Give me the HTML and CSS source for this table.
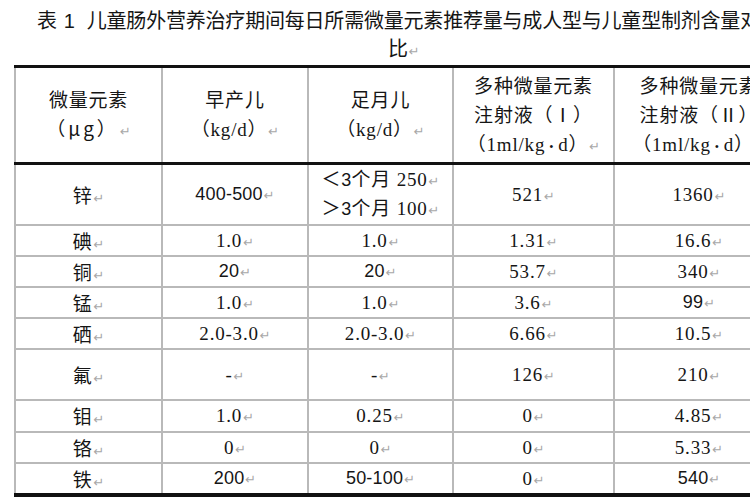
FILE: index.html
```html
<!DOCTYPE html>
<html lang="zh-CN">
<head>
<meta charset="utf-8">
<title>表1 儿童肠外营养微量元素</title>
<link rel="stylesheet" href="styles.css">
</head>
<body>
<div class="title">
  <div class="t1"><span>表</span><span class="tn">1</span><span>儿童肠外营养治疗期间每日所需微量元素推荐量与成人型与儿童型制剂含量对</span></div>
  <div class="t2">比<span class="pm">↵</span></div>
</div>
<table class="tbl">
  <colgroup>
    <col class="c1"><col class="c2"><col class="c3"><col class="c4"><col class="c5">
  </colgroup>
  <thead>
    <tr>
      <th><span class="cjk">微量元素</span><br><span class="cjk mu">（μg）</span><span class="pm">↵</span></th>
      <th><span class="cjk">早产儿</span><br>（kg/d）<span class="pm">↵</span></th>
      <th><span class="cjk">足月儿</span><br>（kg/d）<span class="pm">↵</span></th>
      <th><span class="cjk">多种微量元素</span><br><span class="cjk">注射液（Ⅰ）</span><br>（1ml/kg<span class="dot">•</span>d）<span class="pm">↵</span></th>
      <th><span class="cjk">多种微量元素</span><br><span class="cjk">注射液（Ⅱ）</span><br>（1ml/kg<span class="dot">•</span>d）<span class="pm">↵</span></th>
    </tr>
  </thead>
  <tbody>
    <tr class="r-zn">
      <td class="cjk">锌<span class="pm">↵</span></td>
      <td class="sans">400-500<span class="pm">↵</span></td>
      <td><span class="cjk">＜</span><span class="sans">3</span><span class="cjk">个月</span> 250<span class="pm">↵</span><br><span class="cjk">＞</span><span class="sans">3</span><span class="cjk">个月</span> 100<span class="pm">↵</span></td>
      <td>521<span class="pm">↵</span></td>
      <td>1360<span class="pm">↵</span></td>
    </tr>
    <tr class="r-i">
      <td class="cjk">碘<span class="pm">↵</span></td>
      <td>1.0<span class="pm">↵</span></td>
      <td>1.0<span class="pm">↵</span></td>
      <td>1.31<span class="pm">↵</span></td>
      <td>16.6<span class="pm">↵</span></td>
    </tr>
    <tr class="r-cu">
      <td class="cjk">铜<span class="pm">↵</span></td>
      <td class="sans">20<span class="pm">↵</span></td>
      <td class="sans">20<span class="pm">↵</span></td>
      <td>53.7<span class="pm">↵</span></td>
      <td>340<span class="pm">↵</span></td>
    </tr>
    <tr class="r-mn">
      <td class="cjk">锰<span class="pm">↵</span></td>
      <td>1.0<span class="pm">↵</span></td>
      <td>1.0<span class="pm">↵</span></td>
      <td>3.6<span class="pm">↵</span></td>
      <td class="sans">99<span class="pm">↵</span></td>
    </tr>
    <tr class="r-se">
      <td class="cjk">硒<span class="pm">↵</span></td>
      <td>2.0-3.0<span class="pm">↵</span></td>
      <td>2.0-3.0<span class="pm">↵</span></td>
      <td>6.66<span class="pm">↵</span></td>
      <td>10.5<span class="pm">↵</span></td>
    </tr>
    <tr class="r-f">
      <td class="cjk">氟<span class="pm">↵</span></td>
      <td>-<span class="pm">↵</span></td>
      <td>-<span class="pm">↵</span></td>
      <td>126<span class="pm">↵</span></td>
      <td>210<span class="pm">↵</span></td>
    </tr>
    <tr class="r-mo">
      <td class="cjk">钼<span class="pm">↵</span></td>
      <td>1.0<span class="pm">↵</span></td>
      <td>0.25<span class="pm">↵</span></td>
      <td>0<span class="pm">↵</span></td>
      <td>4.85<span class="pm">↵</span></td>
    </tr>
    <tr class="r-cr">
      <td class="cjk">铬<span class="pm">↵</span></td>
      <td>0<span class="pm">↵</span></td>
      <td>0<span class="pm">↵</span></td>
      <td>0<span class="pm">↵</span></td>
      <td>5.33<span class="pm">↵</span></td>
    </tr>
    <tr class="r-fe">
      <td class="cjk">铁<span class="pm">↵</span></td>
      <td class="sans">200<span class="pm">↵</span></td>
      <td class="sans">50-100<span class="pm">↵</span></td>
      <td>0<span class="pm">↵</span></td>
      <td class="sans">540<span class="pm">↵</span></td>
    </tr>
  </tbody>
</table>
</body>
</html>
```

FILE: styles.css
```css
html, body {
  margin: 0;
  padding: 0;
  background: #ffffff;
}

body {
  width: 750px;
  height: 500px;
  overflow: hidden;
  color: #151515;
  font-family: "Noto Sans CJK SC", "Liberation Sans", sans-serif;
}

.title {
  padding-top: 6px;
  font-size: 20px;
  line-height: 28px;
  letter-spacing: -0.2px;
  white-space: nowrap;
}

.title span {
  line-height: 1;
}

.t1 {
  height: 28px;
  padding-left: 37px;
}

.tn {
  margin: 0 12px 0 7px;
  font-family: "Liberation Sans", sans-serif;
}

.t2 {
  height: 28px;
  padding-left: 388px;
}

.pm {
  font-family: "DejaVu Sans", sans-serif;
  font-size: 13px;
  color: #a8a8a8;
  letter-spacing: 0;
  margin-left: 1px;
}

.tbl {
  margin-top: 3px;
  margin-left: 14px;
  width: 769px;
  table-layout: fixed;
  border-collapse: collapse;
  border-top: 3px solid #111;
  font-family: "Liberation Serif", "Noto Sans CJK SC", serif;
  font-size: 19px;
  letter-spacing: 0.8px;
}

.c1 { width: 147px; }
.c2 { width: 146px; }
.c3 { width: 145px; }
.c4 { width: 161px; }
.c5 { width: 170px; }

.tbl th,
.tbl td {
  box-sizing: border-box;
  padding: 0;
  border: 2px solid #b9b9b9;
  text-align: center;
  vertical-align: middle;
  font-weight: normal;
  line-height: 29px;
  white-space: nowrap;
  overflow: hidden;
}

.tbl th span,
.tbl td span {
  line-height: 1;
}

.tbl th {
  height: 97px;
  border-top: 3px solid #111;
  border-bottom: 3px solid #111;
}

.tbl tbody tr:last-child td {
  border-bottom: 4px solid #111;
}

.cjk {
  font-family: "Noto Sans CJK SC", sans-serif;
}

.mu {
  letter-spacing: 3px;
}

.sans {
  font-family: "Liberation Sans", "Noto Sans CJK SC", sans-serif;
  font-size: 18px;
  letter-spacing: 0.2px;
}

.dot {
  margin: 0 4px;
  font-size: 12px;
}

.r-zn td { height: 61px; }
.r-i td { height: 31px; }
.r-cu td { height: 30px; }
.r-mn td { height: 30px; }
.r-se td { height: 31px; }
.r-f td { height: 51px; }
.r-mo td { height: 32px; }
.r-cr td { height: 30px; }
.r-fe td { height: 29px; }
```
